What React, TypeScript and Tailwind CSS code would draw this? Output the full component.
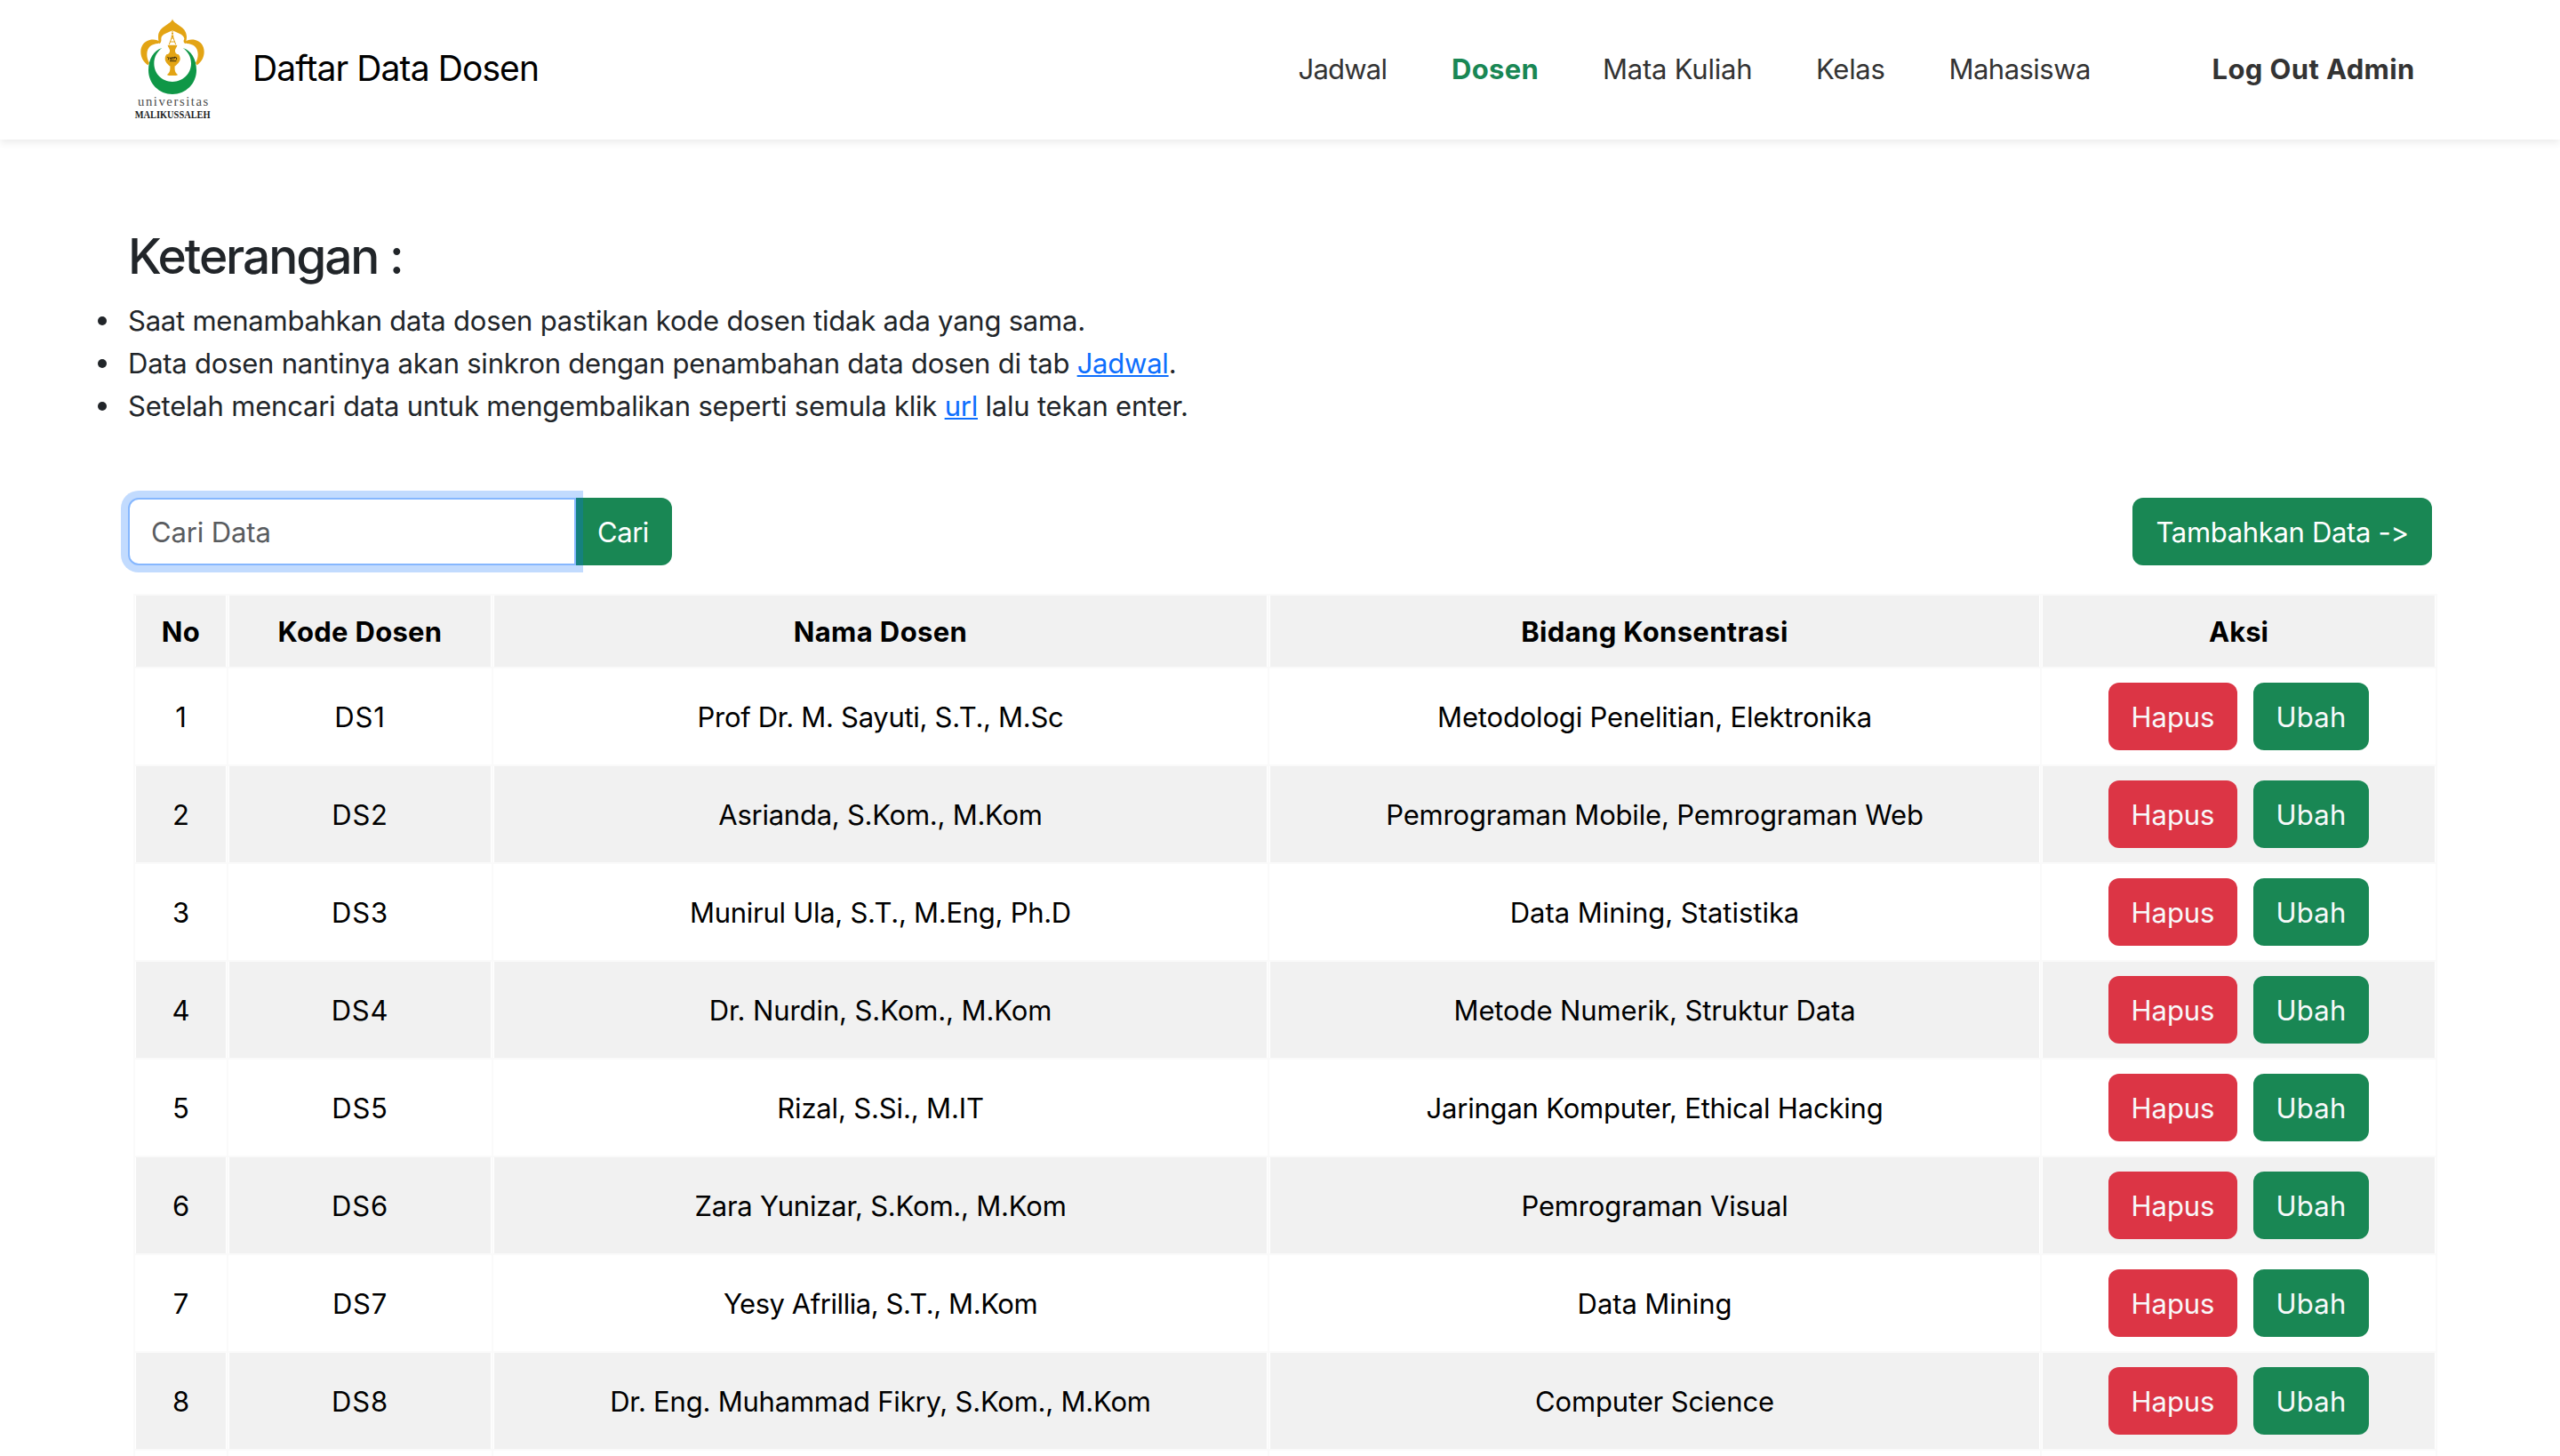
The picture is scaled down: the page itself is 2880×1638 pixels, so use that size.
import type { ReactNode } from "react";

type Link = { label: string; className: string };
type Lecturer = {
  code: string;
  name: string;
  nameTracking: string;
  field: string;
  fieldTracking: string;
};

const links: Link[] = [
  { label: "Jadwal", className: "w-[172.5px] tracking-[-0.77px]" },
  { label: "Dosen", className: "w-[170px] font-bold text-[#198754] tracking-[0.3px]" },
  { label: "Mata Kuliah", className: "w-[240px] tracking-[-0.22px]" },
  { label: "Kelas", className: "w-[149.5px] tracking-[-0.27px]" },
  { label: "Mahasiswa", className: "w-[296px] tracking-[-0.53px]" },
  { label: "Log Out Admin", className: "w-[247.5px] font-bold tracking-[0.38px]" },
];

const lecturers: Lecturer[] = [
  {
    code: "DS1",
    name: "Prof Dr. M. Sayuti, S.T., M.Sc",
    nameTracking: "tracking-[-0.3px]",
    field: "Metodologi Penelitian, Elektronika",
    fieldTracking: "tracking-[-0.18px]",
  },
  {
    code: "DS2",
    name: "Asrianda, S.Kom., M.Kom",
    nameTracking: "tracking-[-0.25px]",
    field: "Pemrograman Mobile, Pemrograman Web",
    fieldTracking: "tracking-[-0.18px]",
  },
  {
    code: "DS3",
    name: "Munirul Ula, S.T., M.Eng, Ph.D",
    nameTracking: "tracking-[-0.28px]",
    field: "Data Mining, Statistika",
    fieldTracking: "tracking-[-0.03px]",
  },
  {
    code: "DS4",
    name: "Dr. Nurdin, S.Kom., M.Kom",
    nameTracking: "tracking-[-0.1px]",
    field: "Metode Numerik, Struktur Data",
    fieldTracking: "tracking-[-0.1px]",
  },
  {
    code: "DS5",
    name: "Rizal, S.Si., M.IT",
    nameTracking: "tracking-[-0.15px]",
    field: "Jaringan Komputer, Ethical Hacking",
    fieldTracking: "tracking-[-0.2px]",
  },
  {
    code: "DS6",
    name: "Zara Yunizar, S.Kom., M.Kom",
    nameTracking: "tracking-[-0.2px]",
    field: "Pemrograman Visual",
    fieldTracking: "tracking-[-0.15px]",
  },
  {
    code: "DS7",
    name: "Yesy Afrillia, S.T., M.Kom",
    nameTracking: "tracking-[-0.45px]",
    field: "Data Mining",
    fieldTracking: "tracking-[-0.1px]",
  },
  {
    code: "DS8",
    name: "Dr. Eng. Muhammad Fikry, S.Kom., M.Kom",
    nameTracking: "tracking-[-0.21px]",
    field: "Computer Science",
    fieldTracking: "tracking-[-0.15px]",
  },
];

const rowGrid = "grid grid-cols-[105px_298px_873px_869px_445px] border-b-2 border-[#fafafa]";
const cell = "flex items-center justify-center border-l-2 border-[#fafafa] px-px bg-clip-content";

function Logo() {
  return (
    <svg viewBox="0 0 330 390" className="h-[130px] w-[110px] shrink-0" aria-label="Universitas Malikussaleh">
      <g fill="#e3a414">
        <path d="M162 19 C166 39 209 42 210 79 C210 88 208 96 206 103 C199 99 198 93 202 86 C201 69 172 65 162 57 C152 65 123 69 124 86 C125 93 123 99 118 103 C115 96 114 88 114 79 C115 42 158 39 162 19Z" />
        <path d="M202 98 C211 89 226 87 239 90 C257 94 269 109 269 130 C269 150 258 166 245 175 L240 168 C246 157 248 148 248 138 C248 114 231 103 211 102 Z" />
        <path d="M122 98 C113 89 98 87 85 90 C67 94 55 109 55 130 C55 150 66 166 79 175 L84 168 C78 157 76 148 76 138 C76 114 93 103 113 102 Z" />
        <path d="M146 107 H178 C178 114 172 117 171 124 C170 131 173 136 178 138 H146 C151 136 154 131 153 124 C152 117 146 114 146 107Z" />
        <path d="M143 138 H181 C186 141 188 147 188 154 C188 165 177 172 172 178 H152 C147 172 137 165 137 154 C137 147 139 141 143 138Z" />
        <path d="M154 177 H170 C169 191 170 199 180 207 C178 211 170 210 162 210 C154 210 146 211 144 207 C154 199 155 191 154 177Z" />
      </g>
      <g fill="none" stroke="#e3a414" strokeWidth="3">
        <path d="M162 57 V80 M161 78 L151 105 M163 78 L173 105 M157 84 H167 M153 96 H171" />
        <path d="M159 68 H165 M158 77 H166" strokeWidth="4" />
      </g>
      <path
        d="M127 117 C99 125 81 154 81 192 C81 237 117 273 162 273 C207 273 243 237 243 192 C243 154 225 125 197 117 C215 129 225 148 225 169 C225 204 197 231 162 231 C127 231 100 204 100 169 C100 148 110 129 127 117Z"
        fill="#0f9747"
      />
      <path
        d="M145 148 L150 151 L148 157 M153 148 L157 157 L160 148 L163 157 M168 149 H163 M167 155 L170 147 L176 150 L175 157 M153 161 H175"
        fill="none"
        stroke="#3c2c0c"
        strokeWidth="3"
      />
      <text
        x="45"
        y="311"
        textLength="238"
        fill="#4b4b4b"
        className="font-['Liberation_Serif',serif] text-[44px]"
      >
        universitas
      </text>
      <text
        x="35"
        y="354"
        textLength="255"
        lengthAdjust="spacingAndGlyphs"
        fill="#1c1c1c"
        className="font-['Liberation_Serif',serif] text-[40px] font-bold"
      >
        MALIKUSSALEH
      </text>
    </svg>
  );
}

function Header() {
  return (
    <header className="flex h-[157px] shrink-0 items-start bg-white pl-[140px] pr-36 shadow-[0_4px_8px_rgba(0,0,0,0.075)]">
      <div className="pt-[15px]">
        <Logo />
      </div>
      <h1 className="ml-[34px] pt-[47px] text-[39px] leading-[60px] tracking-[-0.9px] text-black">
        Daftar Data Dosen
      </h1>
      <nav className="ml-auto flex pt-[54px] text-[#333333]">
        {links.map((link) => (
          <a key={link.label} className={`whitespace-nowrap ${link.className}`}>
            {link.label}
          </a>
        ))}
      </nav>
    </header>
  );
}

function Note({ children, className }: { children: ReactNode; className: string }) {
  return (
    <li className="flex">
      <span className="mr-6 mt-[19px] size-[10px] shrink-0 rounded-full bg-[#212529]" />
      <p className={className}>{children}</p>
    </li>
  );
}

function Notes() {
  const anchor =
    "text-[#0d6efd] underline decoration-2 underline-offset-2 [text-decoration-skip-ink:none]";
  return (
    <section className="shrink-0 pt-[97px]">
      <h2 className="ml-36 text-[55px] font-medium leading-[68px] tracking-[-2.08px]">
        Keterangan :
      </h2>
      <ul className="ml-[110px] mt-[15px]">
        <Note className="tracking-[-0.225px]">
          Saat menambahkan data dosen pastikan kode dosen tidak ada yang sama.
        </Note>
        <Note className="tracking-[-0.233px]">
          Data dosen nantinya akan sinkron dengan penambahan data dosen di tab{" "}
          <a className={anchor}>Jadwal</a>.
        </Note>
        <Note className="tracking-[-0.205px]">
          Setelah mencari data untuk mengembalikan seperti semula klik <a className={anchor}>url</a>{" "}
          lalu tekan enter.
        </Note>
      </ul>
    </section>
  );
}

function Toolbar() {
  return (
    <div className="mx-36 mt-[79px] flex h-[76px] shrink-0 justify-between">
      <div className="flex">
        <input
          placeholder="Cari Data"
          className="relative z-10 w-[504px] rounded-l-xl border-2 border-[#86b7fe] bg-white pl-6 pt-0.5 tracking-[-0.13px] shadow-[0_0_0_8px_rgba(13,110,253,0.25)] outline-none placeholder:text-[#595c5f] placeholder:opacity-100"
        />
        <button className="-ml-0.5 w-[110px] rounded-r-xl bg-[#198754] pt-0.5 tracking-[-0.47px] text-white">
          Cari
        </button>
      </div>
      <button className="w-[337px] rounded-xl bg-[#198754] pt-0.5 tracking-[-0.33px] text-white">
        {"Tambahkan Data ->"}
      </button>
    </div>
  );
}

function Cell({ children, className = "" }: { children?: ReactNode; className?: string }) {
  return (
    <div className={`${cell} ${className}`}>
      <span className="pt-0.5">{children}</span>
    </div>
  );
}

function LecturerTable() {
  return (
    <div className="ml-[150px] mt-8 w-[2592px] shrink-0 border-r-2 border-t-2 border-[#fafafa] text-black">
      <div className={`${rowGrid} h-[82px] font-bold`}>
        <Cell className="bg-[#f1f1f1] tracking-[0.4px]">No</Cell>
        <Cell className="bg-[#f1f1f1] tracking-[0.3px]">Kode Dosen</Cell>
        <Cell className="bg-[#f1f1f1] tracking-[0.38px]">Nama Dosen</Cell>
        <Cell className="bg-[#f1f1f1] tracking-[0.34px]">Bidang Konsentrasi</Cell>
        <Cell className="bg-[#f1f1f1]">Aksi</Cell>
      </div>
      {lecturers.map((lecturer, index) => {
        const shade = index % 2 === 1 ? "bg-[#f1f1f1]" : "bg-white";
        return (
          <div key={lecturer.code} className={`${rowGrid} h-[110px]`}>
            <Cell className={shade}>{index + 1}</Cell>
            <Cell className={`${shade} tracking-[0.8px]`}>{lecturer.code}</Cell>
            <Cell className={`${shade} ${lecturer.nameTracking}`}>{lecturer.name}</Cell>
            <Cell className={`${shade} ${lecturer.fieldTracking}`}>{lecturer.field}</Cell>
            <div className={`${cell} ${shade} gap-[18px] text-[#f8f9fa]`}>
              <button className="h-[76px] w-[145px] rounded-xl bg-[#dc3545] pt-0.5 tracking-[-0.05px]">
                Hapus
              </button>
              <button className="h-[76px] w-[130px] rounded-xl bg-[#198754] pt-0.5 tracking-[0.2px]">
                Ubah
              </button>
            </div>
          </div>
        );
      })}
      <div className={`${rowGrid} h-[110px]`}>
        <Cell />
        <Cell />
        <Cell />
        <Cell />
        <Cell />
      </div>
    </div>
  );
}

export default function App() {
  return (
    <div className="flex h-screen flex-col overflow-hidden bg-white font-['Inter',sans-serif] text-[31px] leading-[48px] text-[#212529] [font-feature-settings:'calt'_0]">
      <Header />
      <Notes />
      <Toolbar />
      <LecturerTable />
    </div>
  );
}
